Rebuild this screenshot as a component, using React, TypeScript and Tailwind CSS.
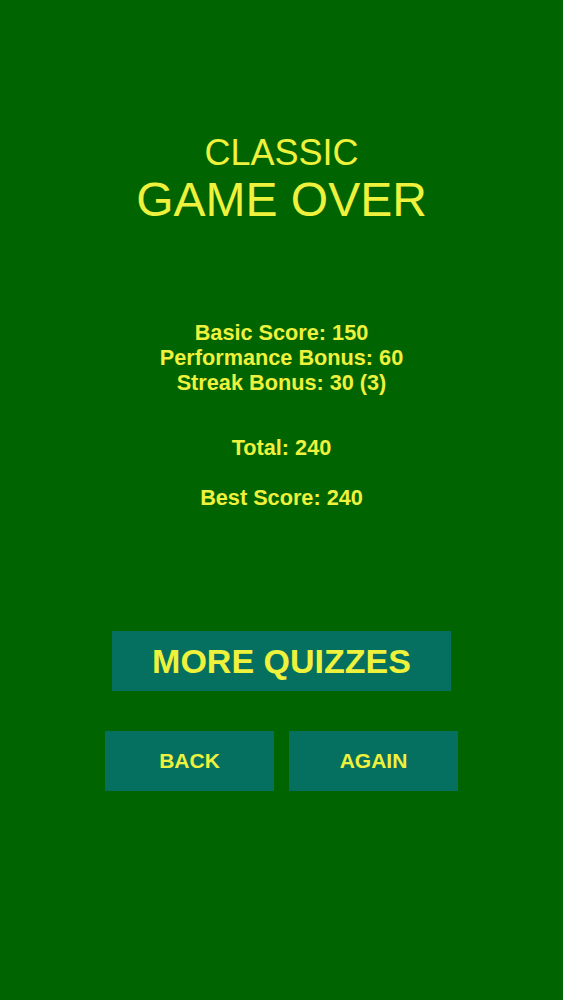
import React from "react";

export default function App() {
  return (
    <div
      className="w-full h-[1000px] bg-[#006400] text-[#eef23c] flex flex-col items-center"
      style={{ fontFamily: '"Liberation Sans", Arial, sans-serif' }}
    >
      <div className="pt-[135px] text-[36px] leading-[36px]">CLASSIC</div>
      <div className="mt-[5px] text-[48px] leading-[48px]">GAME OVER</div>

      <div className="mt-[96px] flex flex-col items-center font-bold text-[21.7px] leading-[25px]">
        <div>Basic Score: 150</div>
        <div>Performance Bonus: 60</div>
        <div>Streak Bonus: 30 (3)</div>
        <div className="mt-[40px]">Total: 240</div>
        <div className="mt-[25px]">Best Score: 240</div>
      </div>

      <button className="mt-[121px] w-[339px] h-[60px] bg-[#05705f] font-bold text-[34px] flex items-center justify-center">
        MORE QUIZZES
      </button>

      <div className="mt-[40px] flex gap-[15px]">
        <button className="w-[169px] h-[60px] bg-[#05705f] font-bold text-[21px] flex items-center justify-center">
          BACK
        </button>
        <button className="w-[169px] h-[60px] bg-[#05705f] font-bold text-[21px] flex items-center justify-center">
          AGAIN
        </button>
      </div>
    </div>
  );
}
